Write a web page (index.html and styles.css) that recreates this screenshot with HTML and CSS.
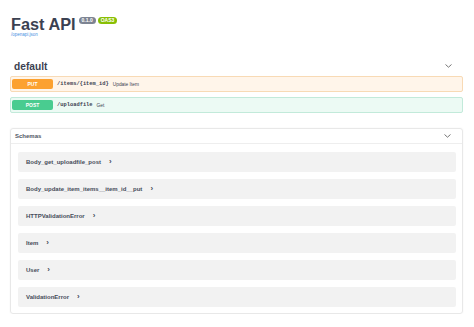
FILE: index.html
```html
<!DOCTYPE html>
<html lang="en">
<head>
    <meta charset="UTF-8">
    <meta name="viewport" content="width=device-width, initial-scale=1.0">
    <title>Fast API - Swagger UI</title>
    <link rel="stylesheet" href="styles.css">
</head>
<body>
    <div class="page">
        <div class="info">
            <div class="title-row">
                <h2 class="title">Fast API</h2>
                <span class="badge badge-version">0.1.0</span>
                <span class="badge badge-oas">OAS3</span>
            </div>
            <a class="spec-link" href="#">/openapi.json</a>
        </div>

        <div class="tag-header">
            <h3 class="tag-name">default</h3>
            <svg class="chevron" width="7" height="4" viewBox="0 0 7 4"><polyline points="0.5,0.5 3.5,3.2 6.5,0.5" fill="none" stroke="#666" stroke-width="0.9"/></svg>
        </div>

        <div class="opblock opblock-put">
            <span class="method">PUT</span>
            <span class="path">/items/{item_id}</span>
            <span class="summary">Update Item</span>
        </div>
        <div class="opblock opblock-post">
            <span class="method">POST</span>
            <span class="path">/uploadfile</span>
            <span class="summary">Get</span>
        </div>

        <section class="models">
            <div class="models-header">
                <h4 class="models-title">Schemas</h4>
                <svg class="chevron" width="7" height="4" viewBox="0 0 7 4"><polyline points="0.5,0.5 3.5,3.2 6.5,0.5" fill="none" stroke="#666" stroke-width="0.9"/></svg>
            </div>
            <div class="models-list">
                <div class="model">Body_get_uploadfile_post <span class="arrow">›</span></div>
                <div class="model">Body_update_item_items__item_id__put <span class="arrow">›</span></div>
                <div class="model">HTTPValidationError <span class="arrow">›</span></div>
                <div class="model">Item <span class="arrow">›</span></div>
                <div class="model">User <span class="arrow">›</span></div>
                <div class="model">ValidationError <span class="arrow">›</span></div>
            </div>
        </section>
    </div>
</body>
</html>
```

FILE: styles.css
```css
body {
    margin: 0;
    background: #fff;
    color: #3b4151;
    font-family: "Liberation Sans", Arial, sans-serif;
}

.page {
    padding: 0 11px 0 10px;
}

.info {
    padding-top: 15px;
}

.title-row {
    display: flex;
    align-items: flex-start;
    gap: 2px;
}

.title {
    margin: 0 1px 0 1px;
    font-size: 16.3px;
    line-height: 18px;
    font-weight: bold;
    color: #3b4151;
}

.badge {
    margin-top: 2px;
    height: 7px;
    padding: 0 3px;
    border-radius: 4px;
    font-size: 5px;
    line-height: 7px;
    font-weight: bold;
    color: #fff;
}

.badge-version {
    background: #7d8492;
}

.badge-oas {
    background: #89bf04;
}

.spec-link {
    display: block;
    margin-left: 1px;
    font-size: 4.5px;
    line-height: 4px;
    color: #4990e2;
    text-decoration: none;
}

.tag-header {
    display: flex;
    align-items: center;
    justify-content: space-between;
    height: 16px;
    margin-top: 21px;
    padding: 0 11px 0 4px;
}

.tag-name {
    margin: 0;
    font-size: 10.2px;
    font-weight: bold;
}

.opblock {
    display: flex;
    align-items: center;
    height: 14px;
    padding: 0 1px;
    border: 1px solid;
    border-radius: 2px;
    margin-top: 2px;
}

.opblock + .opblock {
    margin-top: 5px;
}

.opblock-put {
    background: #fff5ea;
    border-color: #f8dab5;
}

.opblock-post {
    background: #ecfaf4;
    border-color: #c2eada;
}

.method {
    width: 41px;
    height: 10px;
    border-radius: 2px;
    font-size: 5px;
    line-height: 10px;
    font-weight: bold;
    text-align: center;
    color: #fff;
}

.opblock-put .method {
    background: #fca130;
}

.opblock-post .method {
    background: #49cc90;
}

.path {
    margin-left: 4px;
    font-family: "Liberation Mono", "Courier New", monospace;
    font-size: 5.4px;
    font-weight: bold;
}

.summary {
    margin-left: 4px;
    font-size: 4.8px;
}

.models {
    margin-top: 15px;
    border: 1px solid #e8e8e8;
    border-radius: 3px;
    box-shadow: 0 0 2px rgba(0, 0, 0, 0.06);
}

.models-header {
    display: flex;
    align-items: center;
    justify-content: space-between;
    height: 14px;
    padding: 0 11px 0 4px;
    border-bottom: 1px solid #eeeeee;
}

.models-title {
    margin: 0;
    font-size: 6px;
    font-weight: bold;
    color: #505663;
}

.models-list {
    display: flex;
    flex-direction: column;
    gap: 7px;
    padding: 8px 6px 6px 7px;
}

.model {
    display: flex;
    align-items: center;
    height: 20px;
    padding-left: 8px;
    background: #f2f2f2;
    border-radius: 2px;
    font-size: 6px;
    font-weight: bold;
    color: #464c5a;
}

.arrow {
    margin-left: 8px;
    font-size: 8px;
    line-height: 6px;
}
```
